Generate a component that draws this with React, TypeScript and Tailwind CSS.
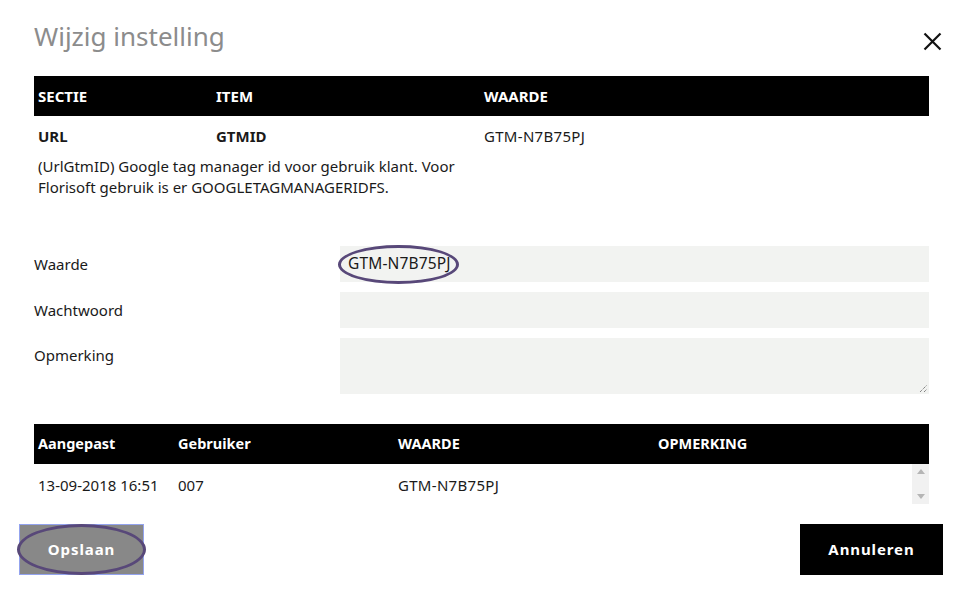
export default function App() {
  const font = { fontFamily: '"Noto Sans", "Open Sans", sans-serif' };
  return (
    <div className="min-h-screen w-[963px] h-[595px] bg-white text-[#1a1a1a] text-[15px] relative" style={font}>
      <div className="px-[34px]">
        <div className="flex items-center justify-between h-[76px] pb-[2px]">
          <h1 className="text-[26px] text-[#8c8c8c] leading-none -mt-[3px]">Wijzig instelling</h1>
          <button className="mr-[-13px] mt-[8px] w-[20px] h-[20px] flex items-center justify-center">
            <svg width="19" height="19" viewBox="0 0 19 19">
              <path d="M1.5 1.5 L17.5 17.5 M17.5 1.5 L1.5 17.5" stroke="#111" strokeWidth="2.2" />
            </svg>
          </button>
        </div>

        <div className="flex bg-black text-white font-bold text-[15px] h-[40px] items-center">
          <div className="w-[178px] pl-[4px]">SECTIE</div>
          <div className="w-[268px] pl-[4px]">ITEM</div>
          <div className="flex-1 pl-[4px]">WAARDE</div>
        </div>
        <div className="flex h-[40px] items-center text-[15px]">
          <div className="w-[178px] pl-[4px] font-bold">URL</div>
          <div className="w-[268px] pl-[4px] font-bold">GTMID</div>
          <div className="flex-1 pl-[4px] tracking-[0.02em]">GTM-N7B75PJ</div>
        </div>
        <p className="w-[446px] pl-[4px] leading-[21px] text-[15px]">
          (UrlGtmID) Google tag manager id voor gebruik klant. Voor Florisoft gebruik is er GOOGLETAGMANAGERIDFS.
        </p>

        <div className="mt-[48px] flex flex-col gap-[10px]">
          <div className="flex items-center">
            <label className="w-[306px]">Waarde</label>
            <div className="flex-1 h-[36px] bg-[#f2f3f1] flex items-center pl-[8px] relative text-[15.5px] tracking-[0.01em]">
              GTM-N7B75PJ
              <span className="absolute left-[-2px] top-[-1px] w-[121px] h-[39px] rounded-[50%] border-[3px] border-[#584879]"></span>
            </div>
          </div>
          <div className="flex items-center">
            <label className="w-[306px]">Wachtwoord</label>
            <div className="flex-1 h-[36px] bg-[#f2f3f1]"></div>
          </div>
          <div className="flex items-start">
            <label className="w-[306px] pt-[6px]">Opmerking</label>
            <div className="flex-1 h-[56px] bg-[#f2f3f1] relative">
              <svg className="absolute right-[1px] bottom-[1px]" width="9" height="9" viewBox="0 0 9 9">
                <path d="M1 8 L8 1 M5 8 L8 5" stroke="#555" strokeWidth="1" strokeDasharray="1 1" />
              </svg>
            </div>
          </div>
        </div>

        <div className="mt-[30px]">
          <div className="flex bg-black text-white font-bold text-[14.5px] h-[40px] items-center">
            <div className="w-[140px] pl-[4px]">Aangepast</div>
            <div className="w-[220px] pl-[4px]">Gebruiker</div>
            <div className="w-[260px] pl-[4px]">WAARDE</div>
            <div className="flex-1 pl-[4px]">OPMERKING</div>
          </div>
          <div className="flex h-[40px] items-center text-[15px]">
            <div className="w-[140px] pl-[4px] pt-[2px]">13-09-2018 16:51</div>
            <div className="w-[220px] pl-[4px] pt-[2px]">007</div>
            <div className="w-[260px] pl-[4px] pt-[2px] tracking-[0.02em]">GTM-N7B75PJ</div>
            <div className="flex-1"></div>
            <div className="w-[17px] h-[40px] bg-[#f1f1f1] flex flex-col items-center justify-between py-[5px]">
              <svg width="8" height="5" viewBox="0 0 8 5"><path d="M0 5 L4 0 L8 5 Z" fill="#b5b5b5" /></svg>
              <svg width="8" height="5" viewBox="0 0 8 5"><path d="M0 0 L8 0 L4 5 Z" fill="#b5b5b5" /></svg>
            </div>
          </div>
        </div>
      </div>

      <div className="mt-[20px] pl-[19px] pr-[20px] flex justify-between">
        <button className="w-[125px] h-[51px] bg-[#888888] border border-[#93a3ee] text-white font-bold text-[15px] tracking-[0.06em] relative">
          Opslaan
          <span className="absolute left-[-3px] top-[-1px] w-[129px] h-[51px] rounded-[50%] border-[3px] border-[#584879]"></span>
        </button>
        <button className="w-[143px] h-[51px] bg-black text-white font-bold text-[15px] tracking-[0.06em]">Annuleren</button>
      </div>
    </div>
  );
}
